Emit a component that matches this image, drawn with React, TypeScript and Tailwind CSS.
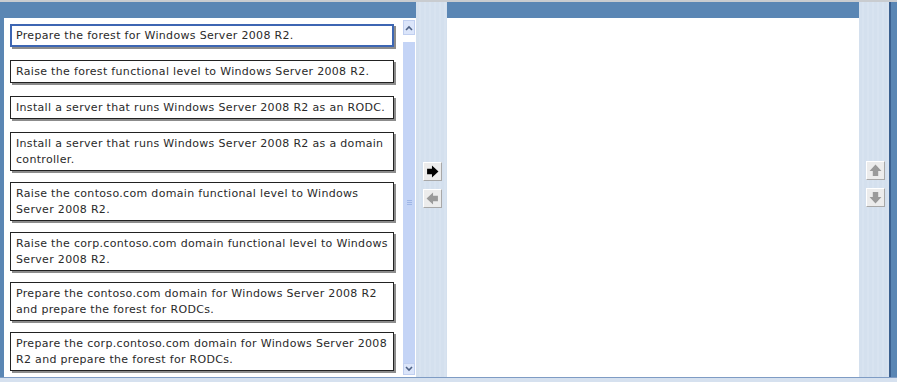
import React from 'react';

const items = [
  'Prepare the forest for Windows Server 2008 R2.',
  'Raise the forest functional level to Windows Server 2008 R2.',
  'Install a server that runs Windows Server 2008 R2 as an RODC.',
  'Install a server that runs Windows Server 2008 R2 as a domain controller.',
  'Raise the contoso.com domain functional level to Windows Server 2008 R2.',
  'Raise the corp.contoso.com domain functional level to Windows Server 2008 R2.',
  'Prepare the contoso.com domain for Windows Server 2008 R2 and prepare the forest for RODCs.',
  'Prepare the corp.contoso.com domain for Windows Server 2008 R2 and prepare the forest for RODCs.',
];

type Dir = 'right' | 'left' | 'up' | 'down';

function BlockArrow({ dir, color }: { dir: Dir; color: string }) {
  const rot = { right: 0, down: 90, left: 180, up: 270 }[dir];
  return (
    <svg width="13" height="13" viewBox="0 0 12 12" style={{ transform: `rotate(${rot}deg)` }}>
      <path d="M1 3.5 H5.5 V0.5 L11.5 6 L5.5 11.5 V8.5 H1 Z" fill={color} />
    </svg>
  );
}

function ArrowButton({ dir, color }: { dir: Dir; color: string }) {
  return (
    <div className="w-[19px] h-[19px] flex items-center justify-center bg-[#ececec] border-t border-l border-white border-r border-b border-r-[#a8a8a8] border-b-[#a8a8a8]">
      <BlockArrow dir={dir} color={color} />
    </div>
  );
}

function Chevron({ up }: { up: boolean }) {
  return (
    <svg width="8" height="6" viewBox="0 0 8 6">
      <path d={up ? 'M1 5 L4 2 L7 5' : 'M1 1 L4 4 L7 1'} stroke="#4d6185" strokeWidth="1.6" fill="none" />
    </svg>
  );
}

function ScrollBar() {
  return (
    <div className="w-[12px] ml-[9px] mr-[1px] flex flex-col bg-[#c4d4f6] mt-[2px] mb-[2px]">
      <div className="h-[15px] flex items-center justify-center bg-[#dbe5fa] border border-[#c0cff0]">
        <Chevron up />
      </div>
      <div className="h-[7px] bg-white" />
      <div className="flex-1 flex items-center justify-center">
        <div className="flex flex-col gap-[1px]">
          <div className="w-[5px] h-[1px] bg-[#9fb6e6]" />
          <div className="w-[5px] h-[1px] bg-[#9fb6e6]" />
          <div className="w-[5px] h-[1px] bg-[#9fb6e6]" />
        </div>
      </div>
      <div className="h-[12px] flex items-center justify-center bg-[#dbe5fa] border border-[#c0cff0]">
        <Chevron up={false} />
      </div>
    </div>
  );
}

function Header() {
  return <div className="h-[16px] bg-[#5a86b4] shrink-0" />;
}

const pale =
  'bg-[repeating-linear-gradient(90deg,#d4e0ee_0px,#d4e0ee_3px,#d8e3f0_3px,#d8e3f0_5px)]';

export default function App() {
  return (
    <div
      className="w-[897px] h-[382px] flex flex-col bg-[#d6e1ef] overflow-hidden"
      style={{ fontFamily: '"DejaVu Sans", Verdana, sans-serif' }}
    >
      <div className="h-[2px] bg-[#c9ccd0] shrink-0" />
      <div className="flex flex-1 min-h-0">
        <div className="w-[4px] bg-[#5a86b4]" />
        {/* left list panel */}
        <div className="w-[412px] flex flex-col">
          <Header />
          <div className="flex-1 flex bg-white min-h-0">
            <div className="flex-1 pl-[6px] pt-[6px] flex flex-col">
              {items.map((text, i) => {
                const double = i >= 3;
                return (
                  <div
                    key={text}
                    className={`text-[11px] tracking-[0.32px] leading-[16px] text-[#2a2a2a] bg-white shadow-[2px_2px_0_#8c8c8c] ${
                      i === 0
                        ? 'border-2 border-[#3d66b3] pt-[2px] pb-[1px] pl-[4px] pr-[1px]'
                        : 'border border-[#222] pt-[3px] pb-[2px] pl-[5px] pr-[2px]'
                    } ${double ? 'mb-[11px]' : 'mb-[13px]'}`}
                  >
                    {text}
                  </div>
                );
              })}
            </div>
            <ScrollBar />
          </div>
        </div>
        {/* middle column */}
        <div className={`w-[31px] ${pale} flex flex-col items-center pt-[160px] gap-[8px] pl-[2px]`}>
          <ArrowButton dir="right" color="#000" />
          <ArrowButton dir="left" color="#9a9a9a" />
        </div>
        {/* right panel */}
        <div className="w-[412px] flex flex-col">
          <Header />
          <div className="flex-1 bg-white" />
        </div>
        {/* right column */}
        <div className={`w-[30px] ${pale} flex flex-col items-center pt-[159px] gap-[8px] pl-[3px]`}>
          <ArrowButton dir="up" color="#9a9a9a" />
          <ArrowButton dir="down" color="#9a9a9a" />
        </div>
        <div className="w-[8px] bg-[#5a86b4] border-l-2 border-[#3a5f8e]" />
      </div>
      <div className="h-[5px] shrink-0 border-t border-[#7f9cc4] bg-[#d6e1ef]" />
    </div>
  );
}
